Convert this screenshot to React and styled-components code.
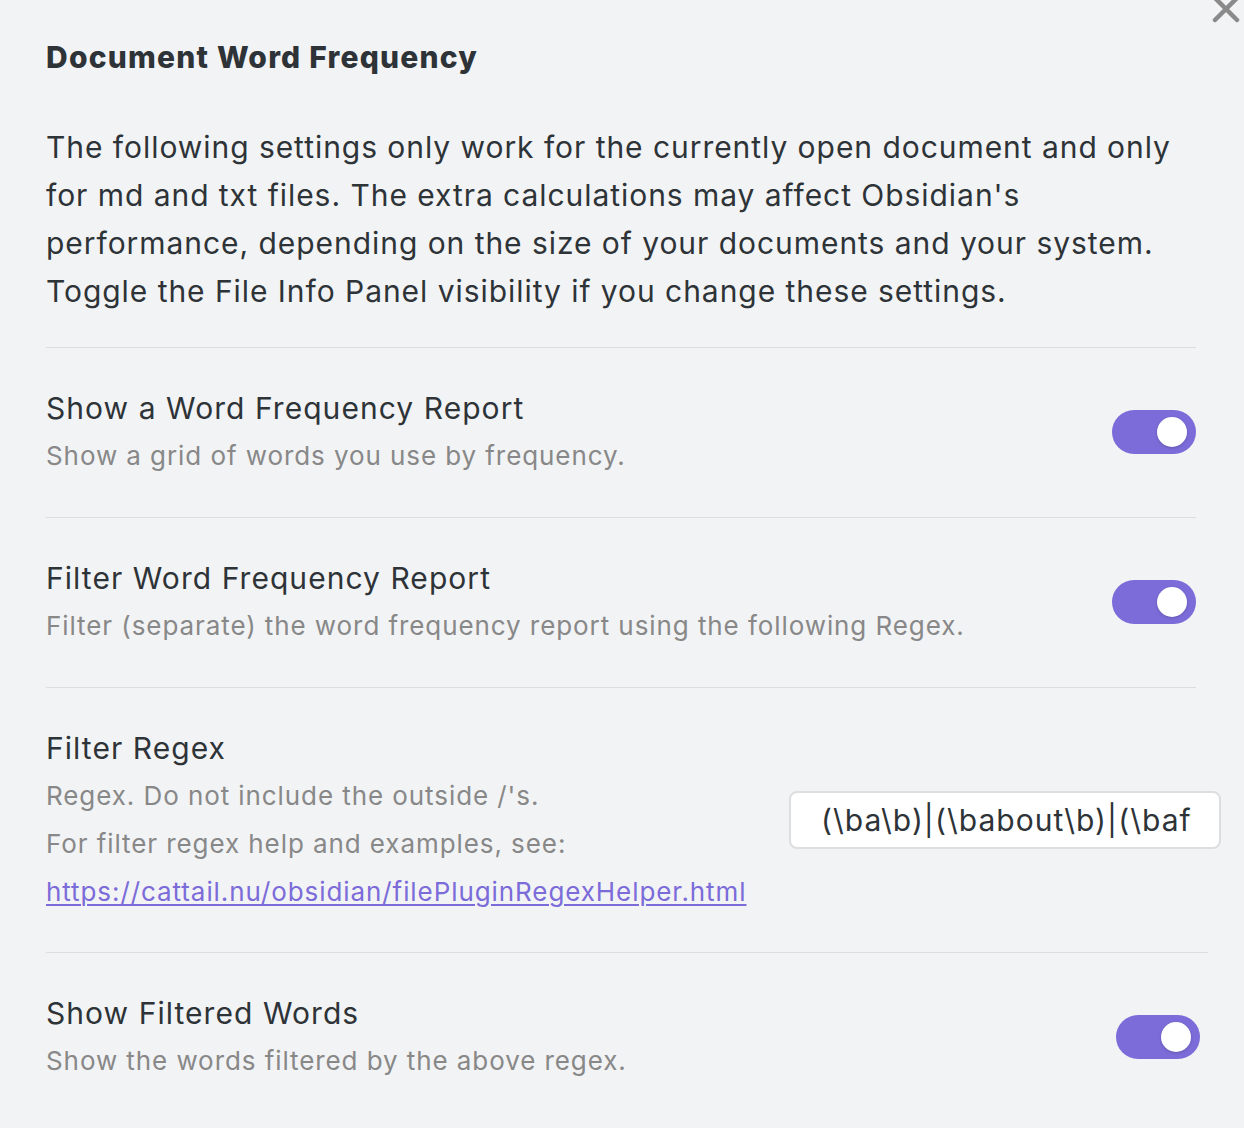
import React, { useState } from "react";
import styled, { createGlobalStyle } from "styled-components";

const GlobalStyle = createGlobalStyle`
  html, body {
    margin: 0;
    padding: 0;
    background: #f2f3f5;
  }
  body {
    font-family: Inter, "Noto Sans", sans-serif;
    color: #2e3338;
  }
`;

const Page = styled.div`
  position: relative;
  width: 1244px;
  height: 1128px;
  overflow: hidden;
  background: #f2f3f5;
  box-sizing: border-box;
  padding: 37px 0 0 46px;
`;

const Close = styled.div`
  position: absolute;
  top: -5px;
  right: 4px;
  width: 28px;
  height: 28px;
  color: #8a8a8a;
`;

const Title = styled.h3`
  margin: 0;
  font-size: 30px;
  line-height: 40px;
  font-weight: 800;
  letter-spacing: 1.2px;
  color: #2e3338;
`;

const Intro = styled.p`
  margin: 46px 0 0;
  width: 1150px;
  font-size: 30px;
  line-height: 48px;
  letter-spacing: 0.95px;
  color: #2e3338;
`;

const Item = styled.div`
  display: flex;
  align-items: center;
  gap: 40px;
  width: ${p => p.$wide ? "1162px" : "1150px"};
  margin-top: ${p => p.$first ? "32px" : "0"};
  padding: 36px 0 ${p => p.$tall ? "36px" : "37px"};
  border-top: 1px solid #dcdddf;
  box-sizing: border-box;
`;

const Info = styled.div`
  flex: 1;
  min-width: 0;
`;

const Name = styled.div`
  font-size: 30px;
  line-height: 48px;
  letter-spacing: 1.05px;
  color: #2e3338;
`;

const Desc = styled.div`
  font-size: 26px;
  line-height: 48px;
  letter-spacing: 0.92px;
  color: #888888;
`;

const Link = styled.a`
  color: #7b6cd9;
  text-decoration: underline;
  text-decoration-thickness: 2px;
  text-underline-offset: 3px;
`;

const Control = styled.div`
  flex: none;
  display: flex;
  align-items: center;
  margin-right: ${p => p.$shift || "0"};
`;

const Track = styled.div`
  position: relative;
  width: 84px;
  height: 44px;
  border-radius: 22px;
  background: ${p => p.$on ? "#7b6cd9" : "#c8c8cc"};
  cursor: pointer;
`;

const Knob = styled.div`
  position: absolute;
  top: 7px;
  left: ${p => p.$on ? "45px" : "9px"};
  width: 30px;
  height: 30px;
  border-radius: 50%;
  background: #ffffff;
  box-shadow: 0 1px 3px rgba(0, 0, 0, 0.2);
`;

const TextInput = styled.input`
  width: 432px;
  height: 58px;
  box-sizing: border-box;
  margin-right: -25px;
  padding: 0 28px 0 30px;
  border: 2px solid #dddee0;
  border-radius: 8px;
  background: #ffffff;
  font-family: Inter, "Noto Sans", sans-serif;
  font-size: 30px;
  letter-spacing: 1.05px;
  color: #2e3338;
  outline: none;
`;

const Toggle = ({ initial }) => {
  const [on, setOn] = useState(initial);
  return (
    <Track $on={on} onClick={() => setOn(!on)}>
      <Knob $on={on} />
    </Track>
  );
};

const App = () => {
  const [regex, setRegex] = useState("(\\ba\\b)|(\\babout\\b)|(\\bafter\\b)|(\\ball\\b)");

  return (
    <Page>
      <GlobalStyle />
      <Close>
        <svg width="28" height="28" viewBox="0 0 28 28">
          <path d="M3 3 L25 25 M25 3 L3 25" stroke="currentColor" strokeWidth="4.5" strokeLinecap="round" />
        </svg>
      </Close>
      <Title>Document Word Frequency</Title>
      <Intro>
        The following settings only work for the currently open document and only
        for md and txt files. The extra calculations may affect Obsidian's
        performance, depending on the size of your documents and your system.
        Toggle the File Info Panel visibility if you change these settings.
      </Intro>

      <Item $first>
        <Info>
          <Name>Show a Word Frequency Report</Name>
          <Desc>Show a grid of words you use by frequency.</Desc>
        </Info>
        <Control>
          <Toggle initial={true} />
        </Control>
      </Item>

      <Item>
        <Info>
          <Name>Filter Word Frequency Report</Name>
          <Desc>Filter (separate) the word frequency report using the following Regex.</Desc>
        </Info>
        <Control>
          <Toggle initial={true} />
        </Control>
      </Item>

      <Item $tall>
        <Info>
          <Name>Filter Regex</Name>
          <Desc>
            Regex. Do not include the outside /'s.
            <br />
            For filter regex help and examples, see:
            <br />
            <Link href="#">https://cattail.nu/obsidian/filePluginRegexHelper.html</Link>
          </Desc>
        </Info>
        <Control>
          <TextInput value={regex} onChange={e => setRegex(e.target.value)} />
        </Control>
      </Item>

      <Item $wide>
        <Info>
          <Name>Show Filtered Words</Name>
          <Desc>Show the words filtered by the above regex.</Desc>
        </Info>
        <Control $shift="8px">
          <Toggle initial={true} />
        </Control>
      </Item>
    </Page>
  );
};

export default App;
